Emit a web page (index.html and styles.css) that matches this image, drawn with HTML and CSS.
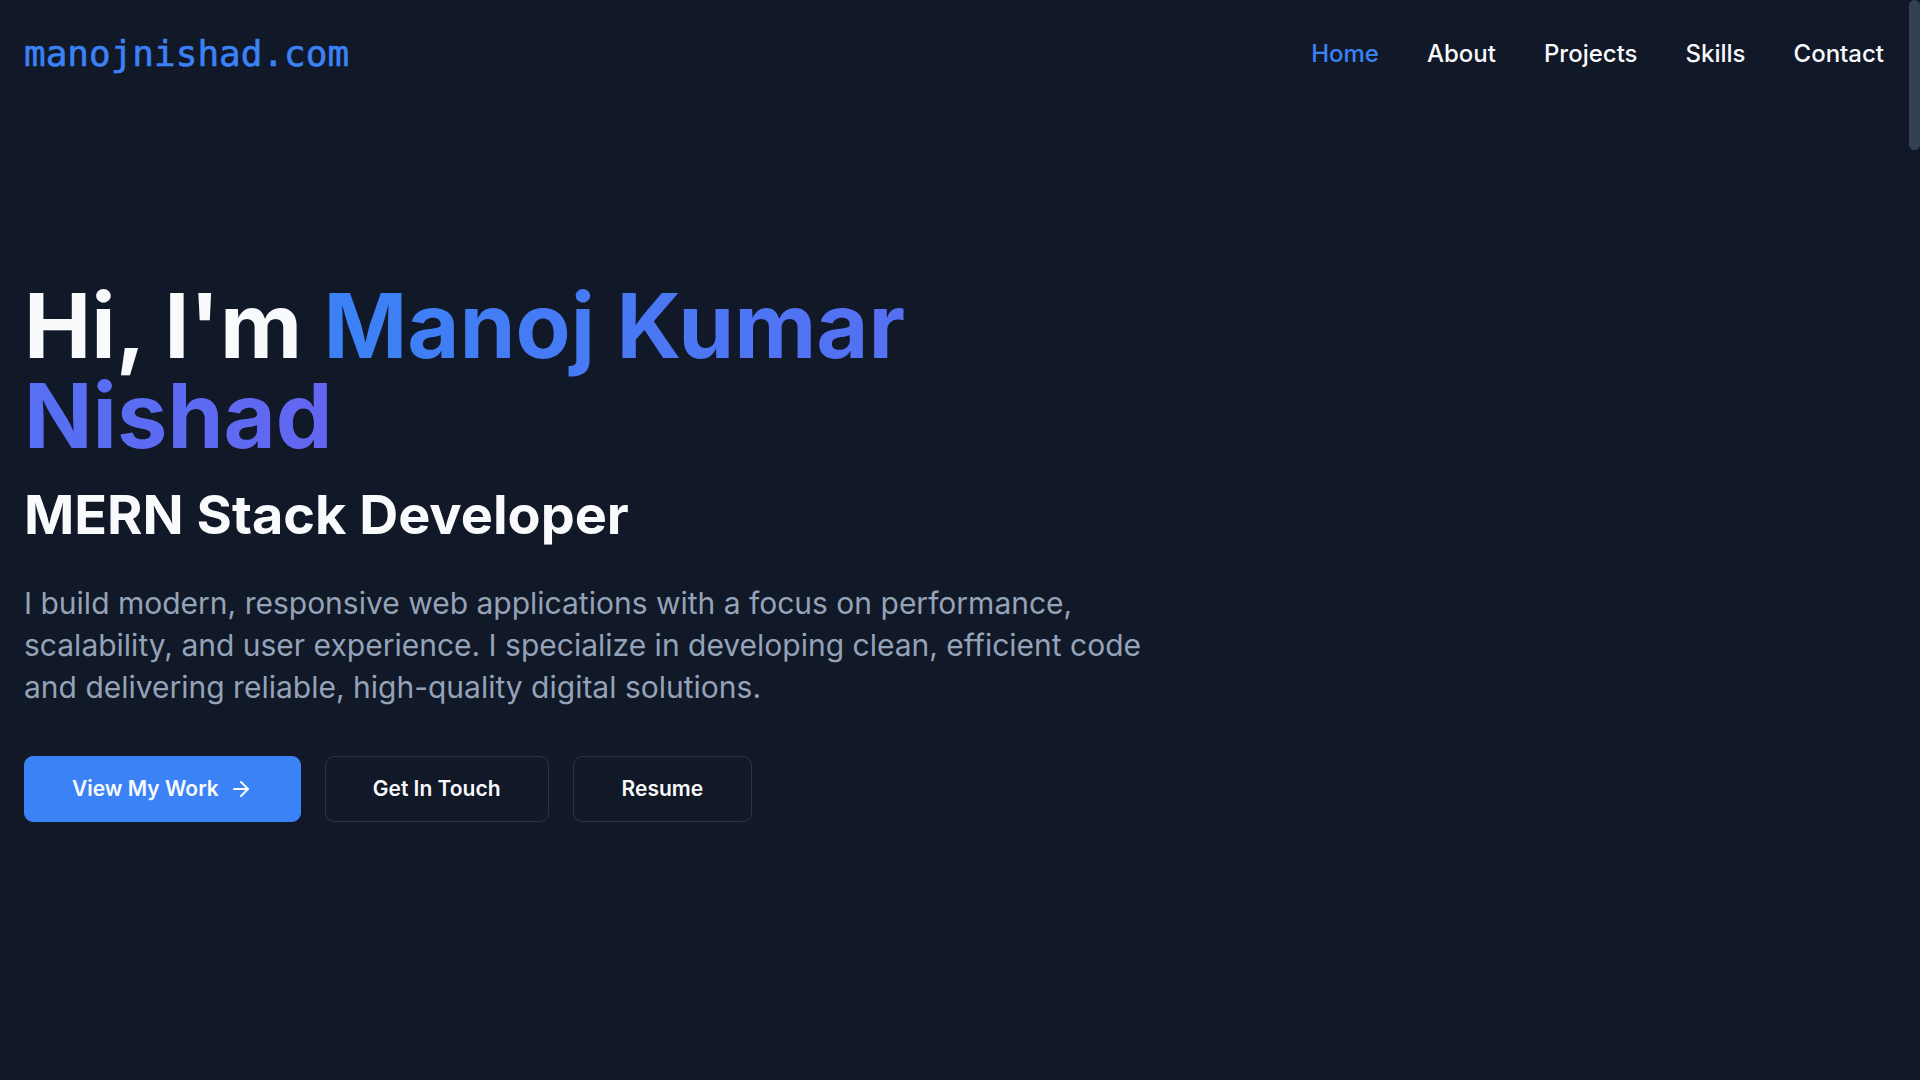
FILE: index.html
```html
<!DOCTYPE html>
<html lang="en">
<head>
<meta charset="utf-8">
<title>Manoj Kumar Nishad — MERN Stack Developer</title>
<link rel="stylesheet" href="styles.css">
</head>
<body>
<div class="page">
  <div class="content">
    <header class="site-header">
      <a class="logo" href="#home">manojnishad.com</a>
      <nav class="nav">
        <a class="nav-link active" href="#home">Home</a>
        <a class="nav-link" href="#about">About</a>
        <a class="nav-link" href="#projects">Projects</a>
        <a class="nav-link" href="#skills">Skills</a>
        <a class="nav-link" href="#contact">Contact</a>
      </nav>
    </header>
    <main>
      <section class="hero" id="home">
        <div class="hero-inner">
          <h1 class="hero-title">Hi, I'm <span class="gradient-text">Manoj Kumar Nishad</span></h1>
          <h2 class="hero-role">MERN Stack Developer</h2>
          <p class="hero-text">I build modern, responsive web applications with a focus on performance, scalability, and user experience. I specialize in developing clean, efficient code and delivering reliable, high-quality digital solutions.</p>
          <div class="hero-actions">
            <a class="btn btn-primary" href="#projects">View My Work
              <svg class="btn-icon" viewBox="0 0 24 24" fill="none" stroke="currentColor" stroke-width="2" stroke-linecap="round" stroke-linejoin="round"><path d="M5 12h14"/><path d="m12 5 7 7-7 7"/></svg>
            </a>
            <a class="btn btn-outline" href="#contact">Get In Touch</a>
            <a class="btn btn-outline btn-resume" href="#resume">Resume</a>
          </div>
        </div>
      </section>
    </main>
  </div>
  <div class="scroll-rail" aria-hidden="true"><div class="scroll-thumb"></div></div>
</div>
</body>
</html>
```
FILE: styles.css
```css
html {
  background: #111827;
}
body {
  margin: 0;
  background: #111827;
  color: #f8fafc;
  font-family: Inter, "Noto Sans", sans-serif;
}
a {
  text-decoration: none;
  color: inherit;
}
.page {
  display: flex;
  min-height: 1080px;
}
.content {
  flex: 1;
  min-width: 0;
}
.scroll-rail {
  width: 12px;
  flex: none;
  background: #111827;
}
.scroll-thumb {
  height: 150px;
  width: 11px;
  margin-left: 1px;
  border-radius: 6px;
  background: #334155;
}
.site-header {
  display: flex;
  align-items: center;
  justify-content: space-between;
  padding: 30px 24px;
}
.logo {
  font-family: "DejaVu Sans Mono", "Liberation Mono", monospace;
  font-size: 36px;
  line-height: 48px;
  color: #3b82f6;
  font-weight: 400;
  -webkit-text-stroke: 0.6px #3b82f6;
}
.nav {
  display: flex;
  gap: 48px;
}
.nav-link {
  font-size: 24px;
  line-height: 36px;
  font-weight: 500;
  color: #f8fafc;
}
.nav-link.active {
  color: #3b82f6;
}
.hero {
  height: 972px;
  padding: 173px 24px 0;
  box-sizing: border-box;
}
.hero-inner {
  max-width: 1152px;
}
.hero-title {
  margin: 0 0 24px;
  font-size: 90px;
  line-height: 90px;
  font-weight: 700;
  color: #f8fafc;
}
.gradient-text {
  background: linear-gradient(to right, #3b82f6, #6366f1);
  -webkit-background-clip: text;
  background-clip: text;
  color: transparent;
}
.hero-role {
  margin: 0 0 37px;
  font-size: 54px;
  line-height: 60px;
  font-weight: 700;
  color: #f8fafc;
}
.hero-text {
  margin: 0 0 48px;
  font-size: 30px;
  line-height: 42px;
  color: #94a3b8;
}
.hero-actions {
  display: flex;
  gap: 24px;
}
.btn {
  display: inline-flex;
  align-items: center;
  gap: 10px;
  padding: 17px 47px;
  font-size: 21px;
  line-height: 30px;
  font-weight: 600;
  border-radius: 9px;
  color: #f8fafc;
}
.btn-primary {
  background: #3b82f6;
  border: 1px solid #3b82f6;
}
.btn-outline {
  border: 1px solid #283548;
  background: transparent;
}
.btn-resume {
  padding-left: 48px;
  padding-right: 48px;
}
.btn-icon {
  width: 24px;
  height: 24px;
}
```
